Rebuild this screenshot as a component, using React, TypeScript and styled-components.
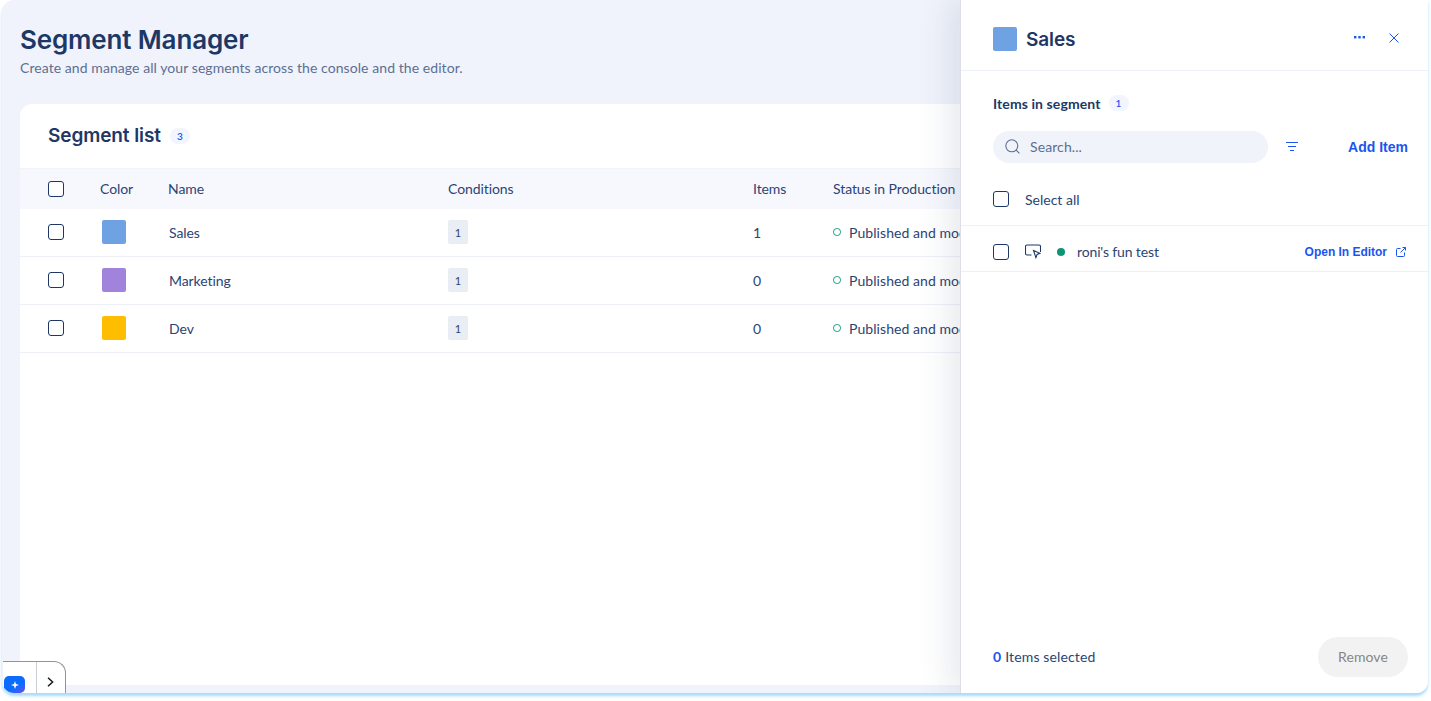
import React from "react";
import styled, { createGlobalStyle } from "styled-components";

const Global = createGlobalStyle`
  html, body { margin: 0; background: #fff; }
  body { font-family: "Lato", "Open Sans", sans-serif; color: #1e3a6b; min-height: 701px; }
`;
const Glow = styled.div`
  border-radius: 12px 0 12px 12px; box-shadow: 0 3px 3px 0 #a8dcfb; width: 1426px; margin-left: 2px;
`;
const Frame = styled.div`
  position: relative; display: flex; height: 693px; width: 1426px;
  border-radius: 12px 0 12px 12px; background: #f0f3fb; overflow: hidden;
`;
const Main = styled.main`
  flex: 1; min-width: 0; display: flex; flex-direction: column; padding: 0 0 8px 18px; overflow: hidden;
`;
const Title = styled.h1`
  margin: 24px 0 0; font: 600 26px/31px "Inter", sans-serif; letter-spacing: -0.15px; color: #1d3866;
`;
const Subtitle = styled.p`
  margin: 3px 0 0; font-size: 14px; line-height: 20px; color: #5d6f92; letter-spacing: 0.07px;
`;
const Card = styled.section`
  flex: 1; margin-top: 26px; background: #fff; border-radius: 12px 0 0 0; min-width: 0; overflow: hidden;
`;
const CardHead = styled.div`
  height: 64px; padding-left: 28px; display: flex; align-items: center; gap: 9px;
`;
const CardTitle = styled.h2`
  margin: 0; font: 600 19px/24px "Inter", sans-serif; letter-spacing: -0.1px; color: #1d3866;
`;
const Badge = styled.span`
  display: inline-flex; align-items: center; justify-content: center; width: 20px; height: 16px;
  border-radius: 8px; background: #f2f5fd; color: #1a55f0; font: 600 10px/16px "Lato", sans-serif;
`;
const Row = styled.div<{ $head?: boolean }>`
  display: grid; grid-template-columns: 52px 68px 280px 305px 80px 300px; align-items: center;
  width: 938px; padding-left: 28px;
  height: ${p => (p.$head ? "39px" : "46px")};
  padding-bottom: 1px;
  font-size: 14px; color: #2b4474; letter-spacing: -0.08px;
  background: ${p => (p.$head ? "#f7f8fe" : "#fff")};
  border-top: ${p => (p.$head ? "1px solid #f1f3fa" : "none")};
  border-bottom: ${p => (p.$head ? "none" : "1px solid #eef0f8")};
  box-sizing: content-box;
`;
const Check = styled.span`
  display: block; flex: none; width: 14px; height: 14px; border: 1.5px solid #1d3866; border-radius: 3px; background: #fff;
`;
const Swatch = styled.span<{ $c: string; $nudge?: boolean }>`
  display: block; flex: none; width: 24px; height: 24px; border-radius: 2px; background: ${p => p.$c};
  margin-left: ${p => (p.$nudge ? "2px" : "0")};
`;
const NameCell = styled.span`
  padding-left: 1px;
`;
const CondChip = styled.span`
  display: flex; align-items: center; justify-content: center; width: 20px; height: 24px;
  background: #e9edf4; border-radius: 2px; font-size: 11px; color: #2b4474;
`;
const Status = styled.span`
  display: flex; align-items: center; gap: 8.5px; white-space: nowrap; letter-spacing: 0.07px;
`;
const Ring = styled.span`
  flex: none; width: 5.5px; height: 5.5px; border: 1.5px solid #10a37f; border-radius: 50%;
`;
const Drawer = styled.aside`
  position: relative; z-index: 2; width: 467px; flex: none; display: flex; flex-direction: column;
  background: #fff; border-left: 1px solid #dcdfe8; box-shadow: -10px 0 30px rgba(60, 70, 110, 0.12);
`;
const DrawerHead = styled.header`
  height: 71px; flex: none; display: flex; align-items: center; padding: 8px 27px 0 32px; box-sizing: border-box;
  border-bottom: 1px solid #eef0f8; gap: 9px;
`;
const DrawerTitle = styled.h2`
  flex: 1; margin: 1px 0 0; font: 600 19px/24px "Inter", sans-serif; letter-spacing: -0.1px; color: #1d3866;
`;
const IconBtn = styled.span`
  display: flex; width: 14px; height: 14px; align-items: center; justify-content: center; color: #1a55f0;
  margin-top: -3px; margin-left: 12px;
`;
const SectionHead = styled.div`
  display: flex; align-items: center; gap: 8px; padding: 24px 32px 0; height: 16px;
  font-size: 14px; font-weight: 700; color: #1d3866; letter-spacing: 0.1px;
`;
const Toolbar = styled.div`
  display: flex; align-items: center; margin: 20px 20px 0 32px;
`;
const Search = styled.div`
  display: flex; align-items: center; gap: 10px; width: 275px; height: 32px; padding: 0 0 1px 12px;
  box-sizing: border-box; border-radius: 16px; background: #f0f3fa; color: #5d6f92; font-size: 14px; letter-spacing: 0.1px;
`;
const FilterBtn = styled.span`
  display: flex; margin-left: 18px; color: #1a55f0;
`;
const AddItem = styled.span`
  margin-left: auto; font: 700 14px/18px "Liberation Sans", sans-serif; color: #1a55f0;
`;
const SelectAll = styled.div`
  display: flex; align-items: center; gap: 16px; height: 63px; padding: 10px 0 0 32px;
  font-size: 14px; color: #2b4474; letter-spacing: 0; border-bottom: 1px solid #eef0f8; box-sizing: border-box;
`;
const ItemRow = styled.div`
  display: flex; align-items: center; height: 46px; padding: 6px 22px 0 32px; box-sizing: border-box;
  border-bottom: 1px solid #eef0f8; font-size: 14px; color: #2b4474; letter-spacing: -0.14px;
`;
const ItemIcon = styled.span`
  display: flex; margin-left: 16px; color: #1d3866;
`;
const Dot = styled.span`
  flex: none; width: 8px; height: 8px; margin-left: 16px; margin-right: 12px; border-radius: 50%; background: #0e9475;
`;
const OpenLink = styled.span`
  margin-left: auto; display: flex; align-items: center; gap: 9px; letter-spacing: -0.02px;
  font: 700 12px/16px "Liberation Sans", sans-serif; color: #1a55f0;
`;
const Footer = styled.footer`
  margin-top: auto; display: flex; align-items: center; justify-content: space-between;
  padding: 0 20px 16px 32px; font-size: 14px; color: #2b4474; letter-spacing: 0.13px;
`;
const FooterText = styled.span`
  margin-top: -2px;
`;
const Count = styled.b`
  color: #1a55f0; font-size: 14px; margin-right: 4px;
`;
const RemoveBtn = styled.span`
  display: flex; align-items: center; justify-content: center; width: 90px; height: 38px; padding-bottom: 2px;
  border-radius: 20px; background: #f2f2f2; color: #868686; font-size: 14px; letter-spacing: 0.1px;
`;
const Widget = styled.div`
  position: absolute; left: 1px; bottom: 0; z-index: 3; display: flex; width: 62px; height: 31px;
  background: #fff; border: 1px solid #8d949e; border-left: none; border-bottom: none; border-radius: 0 12px 0 0;
`;
const WidgetLeft = styled.span`
  width: 34px; display: flex; align-items: flex-end; justify-content: flex-end; padding-right: 11px; box-sizing: border-box;
  border-right: 1px solid #c9cdd4;
`;
const Spark = styled.span`
  display: flex; align-items: center; justify-content: center; width: 21px; height: 17px;
  border-radius: 5px 5px 5px 2px; background: linear-gradient(150deg, #0a6cff 60%, #6a4df0);
`;
const WidgetRight = styled.span`
  flex: 1; display: flex; align-items: center; justify-content: center; padding: 8px 1px 0 0;
`;

const rows = [
  { name: "Sales", color: "#6fa2e2", items: 1 },
  { name: "Marketing", color: "#a183dc", items: 0 },
  { name: "Dev", color: "#ffbd00", items: 0 },
];

export default function App() {
  return (
    <>
      <Global />
      <Glow>
        <Frame>
          <Main>
            <Title>Segment Manager</Title>
            <Subtitle>Create and manage all your segments across the console and the editor.</Subtitle>
            <Card>
              <CardHead>
                <CardTitle>Segment list</CardTitle>
                <Badge>3</Badge>
              </CardHead>
              <Row $head>
                <Check />
                <span>Color</span>
                <span>Name</span>
                <span>Conditions</span>
                <span>Items</span>
                <span>Status in Production</span>
              </Row>
              {rows.map(r => (
                <Row key={r.name}>
                  <Check />
                  <Swatch $c={r.color} $nudge />
                  <NameCell>{r.name}</NameCell>
                  <CondChip>1</CondChip>
                  <span>{r.items}</span>
                  <Status>
                    <Ring />
                    Published and modified
                  </Status>
                </Row>
              ))}
            </Card>
          </Main>
          <Drawer>
            <DrawerHead>
              <Swatch $c="#6fa2e2" />
              <DrawerTitle>Sales</DrawerTitle>
              <IconBtn>
                <svg width="11" height="3" viewBox="0 0 11 3" fill="currentColor">
                  <rect x="0" y="0" width="2.4" height="2.4" />
                  <rect x="4.3" y="0" width="2.4" height="2.4" />
                  <rect x="8.6" y="0" width="2.4" height="2.4" />
                </svg>
              </IconBtn>
              <IconBtn>
                <svg width="10" height="10" viewBox="0 0 10 10" stroke="currentColor" strokeWidth="1" fill="none">
                  <path d="M.5.5l9 9M9.5.5l-9 9" />
                </svg>
              </IconBtn>
            </DrawerHead>
            <SectionHead>
              Items in segment
              <Badge>1</Badge>
            </SectionHead>
            <Toolbar>
              <Search>
                <svg width="15" height="15" viewBox="0 0 15 15" fill="none" stroke="#5d6f92" strokeWidth="1.1">
                  <circle cx="6.8" cy="6.8" r="6" />
                  <path d="M11.2 11.2l3.2 3.2" />
                </svg>
                Search...
              </Search>
              <FilterBtn>
                <svg width="12" height="10" viewBox="0 0 12 10" stroke="currentColor" strokeWidth="1" fill="none">
                  <path d="M0 .5h12M2 4.5h8M4 8.5h4" />
                </svg>
              </FilterBtn>
              <AddItem>Add Item</AddItem>
            </Toolbar>
            <SelectAll>
              <Check />
              Select all
            </SelectAll>
            <ItemRow>
              <Check />
              <ItemIcon>
                <svg width="16" height="15" viewBox="0 0 16 15" fill="none" stroke="currentColor" strokeWidth="1.1">
                  <path d="M6.5 11H2a1.5 1.5 0 0 1-1.5-1.5v-7A1.5 1.5 0 0 1 2 1h12a1.5 1.5 0 0 1 1.5 1.5V8" />
                  <path d="M8.5 6.5l6.3 2.8-2.7 1.1-1.2 3.2z" />
                </svg>
              </ItemIcon>
              <Dot />
              roni's fun test
              <OpenLink>
                Open In Editor
                <svg width="10" height="10" viewBox="0 0 10 10" fill="none" stroke="currentColor" strokeWidth="1">
                  <path d="M4.5 1.5H1.5a1 1 0 0 0-1 1v6a1 1 0 0 0 1 1h6a1 1 0 0 0 1-1V5.5" />
                  <path d="M4.5 5.5L9.5.5M6.5.5h3v3" />
                </svg>
              </OpenLink>
            </ItemRow>
            <Footer>
              <FooterText>
                <Count>0</Count>
                Items selected
              </FooterText>
              <RemoveBtn>Remove</RemoveBtn>
            </Footer>
          </Drawer>
          <Widget>
            <WidgetLeft>
              <Spark>
                <svg width="8" height="8" viewBox="0 0 8 8" fill="#fff">
                  <path d="M4 0l1 3 3 1-3 1-1 3-1-3-3-1 3-1z" />
                </svg>
              </Spark>
            </WidgetLeft>
            <WidgetRight>
              <svg width="7" height="10" viewBox="0 0 7 10" fill="none" stroke="#15181e" strokeWidth="1.5">
                <path d="M1 .8L5.6 5 1 9.2" />
              </svg>
            </WidgetRight>
          </Widget>
        </Frame>
      </Glow>
    </>
  );
}
